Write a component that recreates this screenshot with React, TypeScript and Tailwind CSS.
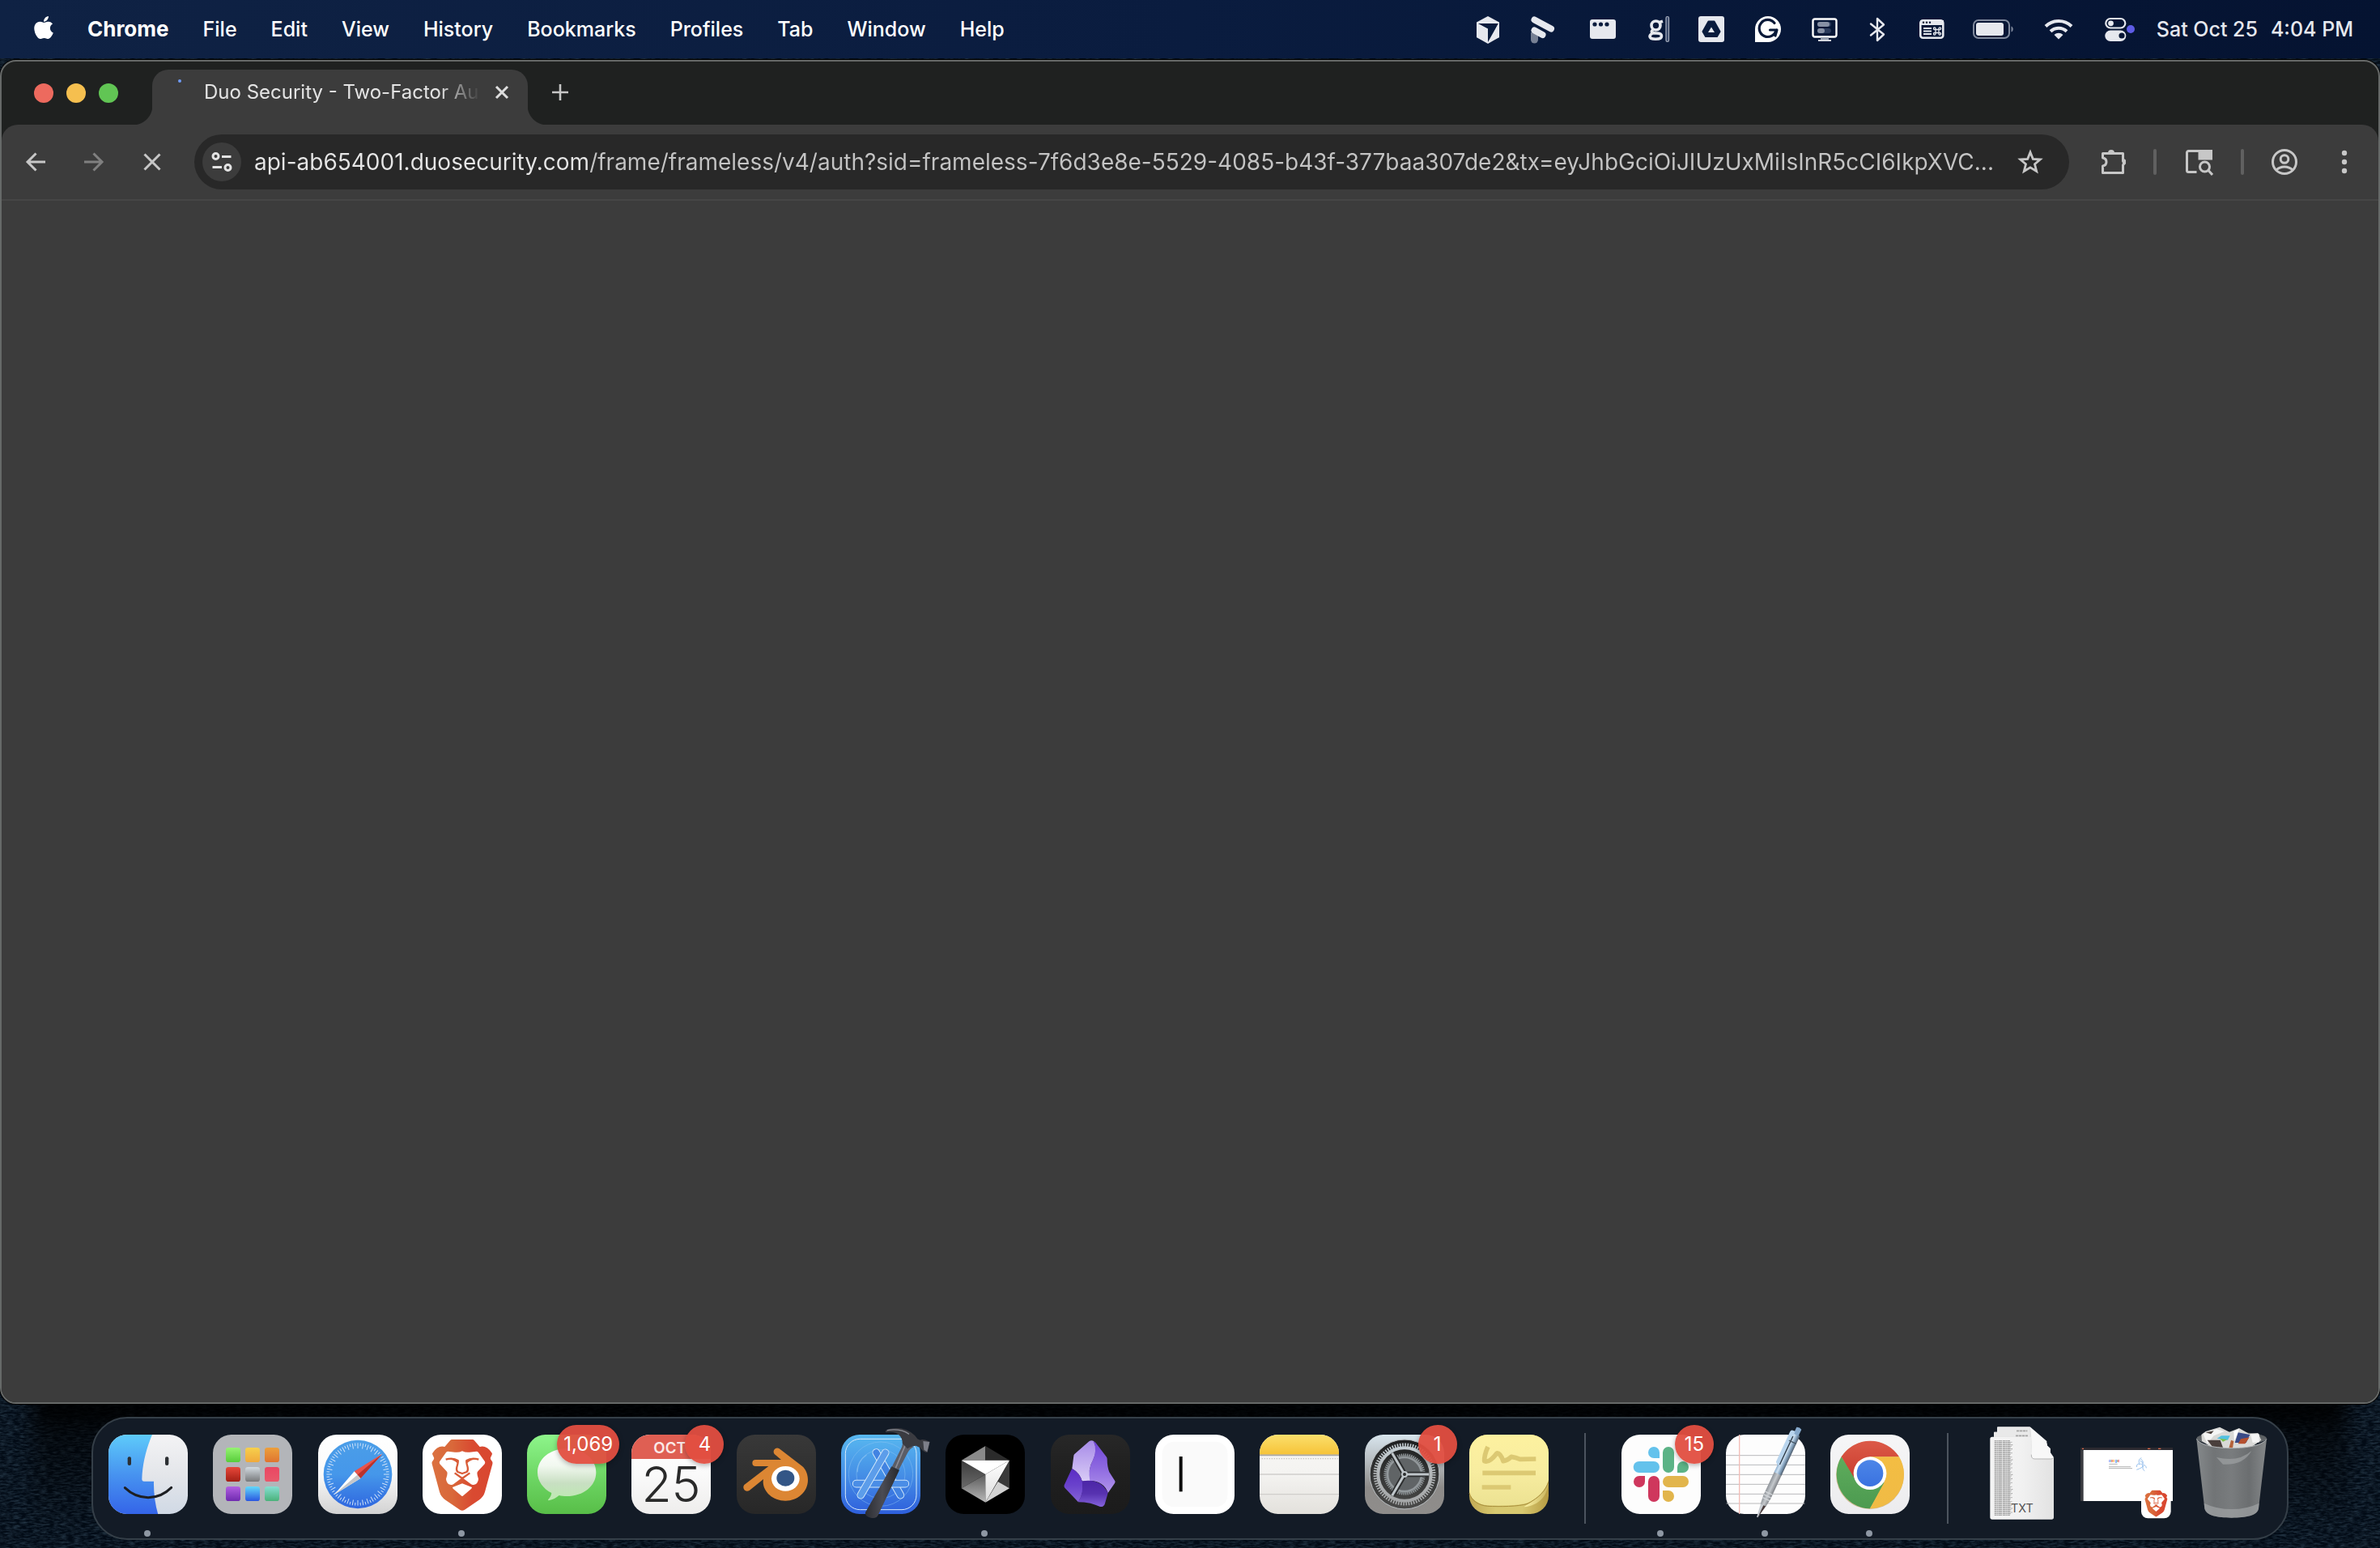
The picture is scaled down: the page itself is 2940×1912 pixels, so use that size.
import React, { type ReactNode } from "react";
import { FaApple } from "react-icons/fa";

/* ---------- Menu bar ---------- */

const MENUS = ["File", "Edit", "View", "History", "Bookmarks", "Profiles", "Tab", "Window", "Help"];

function Glyph({ w, children }: { w: number; children: ReactNode }) {
  return (
    <svg width={w} height="36" viewBox={`0 0 ${w} 36`} fill="#e6e8ee" className="shrink-0" aria-hidden="true">
      {children}
    </svg>
  );
}

const STATUS: { label: string; icon: ReactNode }[] = [
  {
    label: "Cursor",
    icon: (
      <Glyph w={30}>
        <path d="M15 2 29 9.500V28L15 36 1 28V9.500Z" />
        <path d="M2.500 11H28L15 34V18Z" fill="#091b3d" />
        <path d="M2.500 11 15 17.500V35L1 28V11Z" />
        <path d="M28 11 16 34 29 28V11Z" />
      </Glyph>
    ),
  },
  {
    label: "Shortcuts",
    icon: (
      <Glyph w={41}>
        <path d="M6 22h9v9a4.500 4.500 0 0 1-9 0Z" opacity=".5" />
        <path d="M10.500 6.500 31 17.500M10.500 19.500 20.500 25" stroke="#e6e8ee" strokeWidth="8" strokeLinecap="round" />
      </Glyph>
    ),
  },
  {
    label: "Window manager",
    icon: (
      <Glyph w={44}>
        <rect x="6" y="6" width="32" height="24" rx="3" />
        <g fill="#091b3d">
          <circle cx="12" cy="12" r="2.600" />
          <circle cx="19.500" cy="12" r="2.600" />
          <circle cx="27" cy="12" r="2.600" />
        </g>
      </Glyph>
    ),
  },
  {
    label: "Grammar",
    icon: (
      <Glyph w={32}>
        <g fill="none" stroke="#e6e8ee" strokeWidth="3.600">
          <circle cx="11.500" cy="13.500" r="5.500" />
          <path d="M16 9.500 20 8.200M8 18.500c-3.500 3.500-1.500 4.500 4 4.500 5 0 6.500 1 6.500 3.500 0 5-14 5-14.500.5 0-2 1.500-3 3.500-4" />
        </g>
        <rect x="24" y="2.500" width="3.500" height="31" rx="1.700" fill="#39496a" stroke="#a7aebd" strokeWidth="1.200" />
      </Glyph>
    ),
  },
  {
    label: "Drive",
    icon: (
      <Glyph w={32}>
        <rect x="0" y="2" width="32" height="32" rx="3" />
        <path
          d="M12.500 8.500h7l7 12.500-3.500 6H9l-3.500-6Z"
          fill="#091b3d"
          stroke="#091b3d"
          strokeWidth="2"
          strokeLinejoin="round"
        />
        <path d="M16 15.500 20 22h-8Z" />
      </Glyph>
    ),
  },
  {
    label: "Grammarly",
    icon: (
      <Glyph w={44}>
        <path d="M22 2a16 16 0 1 1 0 32H6V18A16 16 0 0 1 22 2Z" fill="#fff" />
        <path
          d="M30 10.500A10.500 10.500 0 1 0 32 19h-7.500M33 19l-2 7"
          fill="none"
          stroke="#081939"
          strokeWidth="3.200"
          strokeLinecap="round"
        />
      </Glyph>
    ),
  },
  {
    label: "Display",
    icon: (
      <Glyph w={32}>
        <rect x="1.500" y="5.500" width="29" height="22" rx="2.500" fill="none" stroke="#fff" strokeWidth="2.400" />
        <rect x="7" y="9" width="17" height="6" rx="3" fill="#2c3b5c" />
        <rect x="7" y="17" width="17" height="6" rx="3" fill="#2c3b5c" />
        <rect x="7" y="9" width="15" height="6" rx="3" fill="#8790a4" />
        <rect x="7" y="17" width="9" height="6" rx="3" fill="#8790a4" />
        <path d="M11 28h10v3H11Z" fill="#9aa2b2" />
        <path d="M8 31h16v2H8Z" fill="#d5d8df" />
      </Glyph>
    ),
  },
  {
    label: "Bluetooth",
    icon: (
      <Glyph w={34}>
        <path
          d="m9 11.500 16 13-8 7.500V5l8 7.500-16 13"
          fill="none"
          stroke="#e6e8ee"
          strokeWidth="2.400"
          strokeLinejoin="round"
          strokeLinecap="round"
        />
      </Glyph>
    ),
  },
  {
    label: "Keyboard shortcuts",
    icon: (
      <Glyph w={36}>
        <rect x="4.300" y="7.300" width="28" height="21.500" rx="3" fill="none" stroke="#e6e8ee" strokeWidth="2.600" />
        <path d="M4 7h29v6H4Z" />
        <g fill="#071736">
          <circle cx="8" cy="9.800" r="1.200" />
          <circle cx="12" cy="9.800" r="1.200" />
          <circle cx="16" cy="9.800" r="1.200" />
        </g>
        <path d="M8 17h10M8 20.500h10M8 24h10" stroke="#e6e8ee" strokeWidth="1.800" />
        <path
          d="M23 18.500h4v4h-4ZM23 18.500h-1.300a1.300 1.300 0 1 1 1.300-1.300ZM27 18.500v-1.300a1.300 1.300 0 1 1 1.300 1.300ZM23 22.500v1.300a1.300 1.300 0 1 1-1.300-1.300ZM27 22.500h1.300a1.300 1.300 0 1 1-1.300 1.300Z"
          fill="none"
          stroke="#e6e8ee"
          strokeWidth="1.300"
        />
      </Glyph>
    ),
  },
  {
    label: "Battery",
    icon: (
      <Glyph w={52}>
        <rect x="2" y="7" width="44" height="22" rx="6" fill="none" stroke="#7f889c" strokeWidth="2" />
        <rect x="5" y="10" width="34" height="16" rx="3" />
        <path d="M48.500 14.500c3 1 3 6 0 7Z" fill="#7f889c" />
      </Glyph>
    ),
  },
  {
    label: "Wi-Fi",
    icon: (
      <Glyph w={46}>
        <g fill="none" stroke="#e6e8ee" strokeWidth="4">
          <path d="M7 14.500a23 23 0 0 1 32 0" />
          <path d="M13 20.800a14.500 14.500 0 0 1 20 0" />
        </g>
        <path d="M23 30.500 17.500 25a8 8 0 0 1 11 0Z" />
      </Glyph>
    ),
  },
  {
    label: "Control Center",
    icon: (
      <Glyph w={42}>
        <rect x="3.300" y="5" width="24" height="11.500" rx="5.700" fill="none" stroke="#e6e8ee" strokeWidth="2.200" />
        <circle cx="9.500" cy="10.800" r="3.400" />
        <rect x="2.300" y="19.500" width="26" height="13.500" rx="6.700" />
        <circle cx="23" cy="26" r="3.600" fill="#061534" />
        <circle cx="34" cy="18" r="5" fill="#5e5ce6" />
      </Glyph>
    ),
  },
];

function MenuBar() {
  return (
    <header className="flex h-[72px] shrink-0 items-center justify-between bg-linear-to-r from-[#0f2244] via-[#0a1c3f] to-[#051331] pr-[33px] pl-[38px] text-[25px] leading-8 text-white">
      <nav aria-label="Menu bar" className="flex items-center gap-[42px]">
        <button aria-label="Apple menu" className="-mt-1 -mr-1">
          <FaApple className="size-8" />
        </button>
        <button className="text-[26px] font-bold">Chrome</button>
        {MENUS.map((m) => (
          <button key={m} className="font-medium">
            {m}
          </button>
        ))}
      </nav>
      <div className="flex items-center gap-8">
        {STATUS.map((s) => (
          <button key={s.label} aria-label={s.label}>
            {s.icon}
          </button>
        ))}
        <button className="-ml-2 flex gap-4 font-medium text-[#e6e8ee]">
          <span>Sat Oct 25</span>
          <span>4:04 PM</span>
        </button>
      </div>
    </header>
  );
}

/* ---------- Browser window ---------- */

function TabStrip() {
  return (
    <div className="flex h-[78px] items-end">
      <div className="flex items-center gap-4 self-center pl-10">
        <button aria-label="Close window" className="size-6 rounded-full bg-[#ed6a5e]" />
        <button aria-label="Minimize window" className="size-6 rounded-full bg-[#f5bf4f]" />
        <button aria-label="Zoom window" className="size-6 rounded-full bg-[#61c554]" />
      </div>
      <div
        role="tab"
        aria-selected="true"
        className="relative ml-[42px] flex h-[68px] w-[464px] items-start rounded-t-[20px] bg-[#3c3c3c] pt-3 pr-[22px] pl-8 before:absolute before:bottom-0 before:-left-6 before:size-6 before:bg-[radial-gradient(circle_at_0_0,transparent_24px,#3c3c3c_25px)] after:absolute after:-right-6 after:bottom-0 after:size-6 after:bg-[radial-gradient(circle_at_100%_0,transparent_24px,#3c3c3c_25px)]"
      >
        <span className="size-1 rounded-full bg-[#6f9bf5]" />
        <span className="ml-7 flex-1 text-[24px] leading-8 whitespace-nowrap text-[#e3e3e3] [mask-image:linear-gradient(90deg,#000_290px,transparent_342px)]">
          Duo Security - Two-Factor Au
        </span>
        <button aria-label="Close tab" className="ml-2 flex h-8 items-center">
          <svg width="20" height="20" viewBox="0 0 20 20" stroke="#dedede" strokeWidth="3">
            <path d="m3 3 14 14M17 3 3 17" />
          </svg>
        </button>
      </div>
      <button aria-label="New tab" className="mb-[29px] ml-[29px]">
        <svg width="22" height="22" viewBox="0 0 22 22" stroke="#c7c7c7" strokeWidth="2.600">
          <path d="M11 1v20M1 11h20" />
        </svg>
      </button>
    </div>
  );
}

function ToolButton({ label, children, w = 32 }: { label: string; children: ReactNode; w?: number }) {
  return (
    <button aria-label={label} className="shrink-0">
      <svg width={w} height="36" viewBox={`0 0 ${w} 36`} fill="none" stroke="#c7c7c7" strokeWidth="3">
        {children}
      </svg>
    </button>
  );
}

function Toolbar() {
  return (
    <div className="flex h-[94px] items-center rounded-t-[20px] border-b-2 border-[#464646] bg-[#3c3c3c] px-[26px]">
      <div className="flex items-center gap-10">
        <ToolButton label="Back">
          <path d="M28 18H6M16.500 7.500 6 18l10.500 10.500" />
        </ToolButton>
        <ToolButton label="Forward">
          <path d="M4 18h22M15.500 7.500 26 18 15.500 28.500" stroke="#808080" />
        </ToolButton>
        <ToolButton label="Stop loading">
          <path d="m6.500 8.500 19 19M25.500 8.500l-19 19" />
        </ToolButton>
      </div>
      <div className="ml-9 flex h-[68px] min-w-0 flex-1 items-center rounded-full bg-[#282828] pr-8 pl-2.5">
        <button
          aria-label="View site information"
          className="flex size-12 shrink-0 items-center justify-center rounded-full bg-[#3c3c3c]"
        >
          <svg width="26" height="26" viewBox="0 0 26 26" fill="none" stroke="#e3e3e3" strokeWidth="3">
            <circle cx="5.500" cy="6" r="3.500" />
            <path d="M13 6.500h11.500M1.500 19.500H13" />
            <circle cx="20.500" cy="20" r="3.500" />
          </svg>
        </button>
        <input
          aria-label="Address and search bar"
          readOnly
          value="api-ab654001.duosecurity.com/frame/frameless/v4/auth?sid=frameless-7f6d3e8e-5529-4085-b43f-377baa307de2&tx=eyJhbGciOiJIUzUxMiIsInR5cCI6IkpXVC..."
          className="ml-4 min-w-0 flex-1 bg-[linear-gradient(90deg,#e6e6e6_415px,#c4c4c4_415px)] bg-clip-text text-[28px] leading-10 text-transparent outline-none"
        />
        <button aria-label="Bookmark this tab" className="shrink-0">
          <svg width="32" height="32" viewBox="0 0 32 32" fill="none" stroke="#c7c7c7" strokeWidth="2.800">
            <path d="m16 4 3.300 8.300 9 .7-6.800 5.800 2.200 8.700L16 22.800l-7.700 4.700 2.200-8.700L3.700 13l9-.7Z" />
          </svg>
        </button>
      </div>
      <div className="ml-[38px] flex items-center gap-[34px]">
        <ToolButton label="Extensions">
          <path d="M3.500 7.500h25v9.500a4 4 0 0 1 0 5v9.500h-25v-8.500c6-1 6-9 0-10Z" strokeLinejoin="round" />
          <path d="M10 7a4 4 0 0 1 8 0ZM28.500 14a4 4 0 0 1 0 8Z" fill="#c7c7c7" stroke="none" />
        </ToolButton>
        <span className="h-8 w-1 rounded-full bg-[#606060]" />
        <ToolButton label="Search tabs" w={36}>
          <path d="M15.500 30.500H5.500a2 2 0 0 1-2-2v-22a2 2 0 0 1 2-2h26a2 2 0 0 1 2 2V14" />
          <path d="M19 4.500h14.500V14H19Z" fill="#c7c7c7" />
          <circle cx="25.500" cy="24" r="6" />
          <path d="m30 28.500 5 5.500" />
        </ToolButton>
        <span className="h-8 w-1 rounded-full bg-[#606060]" />
        <ToolButton label="Profile">
          <circle cx="16" cy="18" r="14.500" />
          <circle cx="16" cy="14.500" r="4.800" />
          <path d="M6 28c5-5.500 15-5.500 20 0" />
        </ToolButton>
        <div className="ml-2 flex">
          <ToolButton label="Chrome menu">
            <g fill="#c7c7c7" stroke="none">
              <circle cx="16" cy="7" r="3.200" />
              <circle cx="16" cy="18" r="3.200" />
              <circle cx="16" cy="29" r="3.200" />
            </g>
          </ToolButton>
        </div>
      </div>
    </div>
  );
}

function BrowserWindow() {
  return (
    <section
      aria-label="Duo Security - Two-Factor Authentication"
      className="mt-0.5 flex flex-1 flex-col overflow-hidden rounded-[20px] border-2 border-[#666968] bg-[#1f2120] shadow-[0_0_0_1px_#000]"
    >
      <TabStrip />
      <Toolbar />
      <main className="flex-1 bg-[#3c3c3c]" />
    </section>
  );
}

/* ---------- Dock artwork ---------- */

/* Each drawing is laid out on a 294-unit square with its own origin. */
function Art({ x, tile, children }: { x: number; tile?: string; children?: ReactNode }) {
  return (
    <svg width="98" height="98" viewBox={`${x} 216 294 294`} className="overflow-visible" aria-hidden="true">
      {tile && <rect x={x} y="216" width="294" height="294" rx="68" fill={tile} />}
      {children}
    </svg>
  );
}

function Grad({ id, stops, across = false }: { id: string; stops: string[]; across?: boolean }) {
  return (
    <linearGradient id={id} x1="0" y1="0" x2={across ? 1 : 0} y2={across ? 0 : 1}>
      {stops.map((c, i) => (
        <stop key={i} offset={i / (stops.length - 1)} stopColor={c} />
      ))}
    </linearGradient>
  );
}

function Finder() {
  return (
    <Art x={402}>
      <Grad id="fi1" stops={["#5ecbfa", "#4793f0", "#3464e8"]} />
      <Grad id="fi2" stops={["#f3f3f5", "#e4e6ea", "#d0d9e5"]} />
      <clipPath id="fic">
        <rect x="402" y="216" width="294" height="294" rx="68" />
      </clipPath>
      <g clipPath="url(#fic)">
        <path d="M402 216h294v294H402Z" fill="url(#fi2)" />
        <path d="M402 216H564C541 270 528 325 526 380Q526 389 534 389H570C569 430 575 475 586 512H402Z" fill="url(#fi1)" />
      </g>
      <rect x="473" y="298" width="13" height="32" rx="6" fill="#2c2f33" />
      <rect x="612" y="298" width="13" height="32" rx="6" fill="#2c2f33" />
      <path d="M463 413Q500 449 549 449T635 412" fill="none" stroke="#1d1f22" strokeWidth="9" strokeLinecap="round" />
    </Art>
  );
}

const PADS: [string, string][] = [
  ["#96f374", "#57cd3a"],
  ["#f6d04d", "#f0a93c"],
  ["#eca03c", "#df7430"],
  ["#e8483a", "#a31f15"],
  ["#d3dbe1", "#77797b"],
  ["#ea4763", "#e9586a"],
  ["#b15fe0", "#6f2bb0"],
  ["#62d9fb", "#2a56e0"],
  ["#86dfd2", "#4ab27a"],
];

function Launchpad() {
  return (
    <Art x={786} tile="#b3b5b9">
      {PADS.map((p, i) => (
        <g key={i}>
          <Grad id={`lp${i}`} stops={p} />
          <rect x={834 + (i % 3) * 72} y={264 + Math.floor(i / 3) * 72} width="54" height="54" rx="10" fill={`url(#lp${i})`} />
        </g>
      ))}
    </Art>
  );
}

function Safari() {
  return (
    <Art x={1176} tile="url(#sf1)">
      <Grad id="sf1" stops={["#ffffff", "#fafafa", "#d2d2d2"]} />
      <Grad id="sf2" stops={["#4b9ee8", "#4597ea", "#2f66df"]} />
      <circle cx="1323" cy="363" r="127" fill="url(#sf2)" />
      {Array.from({ length: 72 }, (_, i) => (
        <path
          key={i}
          d={i % 2 ? "M1323 247v11" : "M1323 247v20"}
          stroke="#cfe2f8"
          strokeWidth="3"
          transform={`rotate(${i * 5} 1323 363)`}
        />
      ))}
      <path d="M1414 287 1310 352 1333 378Z" fill="#e9534a" />
      <path d="M1414 287 1321 365 1333 378Z" fill="#b9332c" />
      <path d="M1236 438 1310 352 1333 378Z" fill="#fff" />
      <path d="M1236 438 1321 365 1333 378Z" fill="#c4c7cb" />
    </Art>
  );
}

function Lion() {
  return (
    <>
      <Grad id="lion" stops={["#db7140", "#d9683a", "#d94a31", "#d94730"]} across />
      <path
        d="M176 234H252Q256 234 259 238L279 261Q304 254 324 284 326 287 324 290L319 301Q318 304 319 307L326 317Q327 321 326 325L298 428Q293 446 276 458L222 495Q214 500 206 495L152 458Q135 446 130 428L102 325Q101 321 102 317L109 307Q110 304 109 301L104 290Q102 287 104 284 124 254 149 261L169 238Q172 234 176 234Z"
        fill="url(#lion)"
      />
      <path
        d="M161 278 187 281Q201 283 214 277 227 283 241 281L267 278Q271 278 274 282L298 316Q300 321 297 325L272 352Q266 358 270 366L274 380Q273 398 256 402 251 403 247 400L219 379Q214 376 209 379L181 400Q177 403 172 402 155 398 154 380L158 366Q162 358 156 352L131 325Q128 321 130 316L154 282Q157 278 161 278Z"
        fill="#fff"
      />
      <path d="M214 397 250 411Q250 414 247 417L218 442Q214 446 210 442L181 417Q178 414 178 411Z" fill="#fff" />
      <g fill="none" stroke="#d95c38" strokeWidth="7" strokeLinejoin="round">
        <path d="M153 308Q180 300 198 312 200 316 194 336 191 348 197 354L214 360 231 354Q237 348 234 336 228 316 230 312 248 300 275 308" />
        <path d="M186 358 214 378 242 358" />
      </g>
      <path d="M153 307Q180 299 200 312L196 322Q178 305 153 307ZM275 307Q248 299 228 312L232 322Q250 305 275 307Z" fill="#d95c38" />
    </>
  );
}

function Brave() {
  return (
    <Art x={67} tile="#fff">
      <Lion />
    </Art>
  );
}

function Messages() {
  return (
    <Art x={456} tile="url(#ms1)">
      <Grad id="ms1" stops={["#8ef58b", "#6fd866", "#58be48"]} />
      <Grad id="ms2" stops={["#ffffff", "#f1f8ef", "#c8dfc2", "#bdeab0"]} />
      <path d="M603 268c62 0 109 38 109 88s-47 88-109 88c-10 0-20-1-28-3-10 9-24 16-38 19-5 0-3-3 0-6 6-7 9-14 10-22-31-16-52-44-52-76 0-50 46-88 108-88Z" fill="url(#ms2)" />
    </Art>
  );
}

function Calendar() {
  return (
    <Art x={840} tile="url(#ca1)">
      <Grad id="ca1" stops={["#ffffff", "#fafafa", "#eeedec"]} />
      <path d="M840 306V284A68 68 0 0 1 908 216H1066A68 68 0 0 1 1134 284V306Z" fill="#df5f53" />
      <text x="922" y="286" fontSize="56" fontWeight="600" fill="#fbe9e7">
        OCT
      </text>
      <text x="987" y="466" fontSize="182" fontWeight="300" fill="#2a2a2a" textAnchor="middle">
        25
      </text>
    </Art>
  );
}

function Blender() {
  return (
    <Art x={1230} tile="url(#bl1)">
      <Grad id="bl1" stops={["#383838", "#303030", "#272727"]} />
      <path
        d="M1388 268 1472 332C1487 344 1494 364 1494 384 1494 428 1456 461 1411 461 1364 461 1328 428 1328 390L1329 381 1277 423C1262 432 1249 414 1258 402L1348 333H1300A11.500 11.500 0 0 1 1300 309H1395L1370 288C1361 276 1374 260 1388 268Z"
        fill="#dc8633"
      />
      <ellipse cx="1411" cy="379" rx="52" ry="46" fill="#fff" />
      <ellipse cx="1411" cy="377" rx="33" ry="30" fill="#335686" />
    </Art>
  );
}

function Xcode() {
  return (
    <Art x={120} tile="url(#xc1)">
      <Grad id="xc1" stops={["#58b8f0", "#458fe6", "#2e5fdc"]} />
      <Grad id="xc2" stops={["#2b2c31", "#4b4c54", "#26272b"]} across />
      <rect x="136" y="232" width="263" height="262" rx="54" fill="none" stroke="#d9ecfb" strokeWidth="3" />
      <g fill="none" stroke="#8ec4f2" strokeWidth="2" opacity=".7">
        <circle cx="267" cy="362" r="119" />
        <circle cx="267" cy="362" r="90" />
        <path d="M180 355q0-40 34-64" strokeWidth="4" />
      </g>
      <g fill="none" strokeLinecap="round">
        <path d="M250 282 340 440" stroke="#cfe6fa" strokeWidth="29" />
        <path d="M250 282 340 440" stroke="#4283e2" strokeWidth="23" />
        <path d="M176 398H358" stroke="#cfe6fa" strokeWidth="29" />
        <path d="M176 398H358" stroke="#4a8de6" strokeWidth="23" />
        <path d="M284 283 193 440" stroke="#cfe6fa" strokeWidth="29" />
        <path d="M284 283 193 440" stroke="#5c9dea" strokeWidth="23" />
      </g>
      <path d="M350 240 388 262Q375 268 366 284L334 346 308 336 345 262Z" fill="#5b5d66" />
      <path d="M360 250 322 340" stroke="#8a8c96" strokeWidth="5" />
      <path d="M307 334 336 347 258 512Q252 528 230 524 206 518 210 504Z" fill="url(#xc2)" />
      <path
        d="M284 202Q304 188 342 193 384 202 403 232L413 236Q424 230 449 242L440 282Q426 282 412 264L397 257Q377 259 366 268L347 248Q348 222 324 210 304 204 286 208Z"
        fill="#3a3b41"
      />
      <path d="M290 200Q340 192 372 214" fill="none" stroke="#8c8e97" strokeWidth="4" />
      <path d="M424 240 448 243 439 280 427 272Z" fill="#7d7f89" />
    </Art>
  );
}

function Cursor() {
  return (
    <Art x={503} tile="#000">
      <Grad id="cu1" stops={["#3c3c3c", "#6a6a6a"]} />
      <Grad id="cu2" stops={["#ffffff", "#dcdcdc"]} />
      <Grad id="cu3" stops={["#5a5a5a", "#b9b9b9"]} />
      <path d="M562 311 651 258V311Z" fill="#8a8a8a" />
      <path d="M651 258 740 311H651Z" fill="#2b2b2b" />
      <path d="M562 311 651 363 562 415Z" fill="url(#cu1)" />
      <path d="M562 415 651 363V467Z" fill="url(#cu3)" />
      <path d="M740 311V415L697 390Z" fill="#3a3a3a" />
      <path d="M697 390 740 415 651 467Z" fill="#d2d2d2" />
      <path d="M740 311 651 467V363Z" fill="url(#cu2)" />
      <path d="M562 311H740L651 363Z" fill="#fff" />
    </Art>
  );
}

function Obsidian() {
  return (
    <Art x={893} tile="url(#ob0)">
      <Grad id="ob0" stops={["#272727", "#1f1f1f", "#1b1b1b"]} />
      <Grad id="ob1" stops={["#a78be8", "#d9ccf6"]} />
      <Grad id="ob2" stops={["#6f45d6", "#8d68e0", "#b195ec"]} />
      <Grad id="ob3" stops={["#5a2cc4", "#6a42cc", "#8463d6"]} />
      <Grad id="ob4" stops={["#4b25a6", "#5732b0", "#8563dc"]} />
      <path d="M1035 241 981 288Q978 291 978 295L972 342Q1000 357 1010 390L1042 387Q1028 345 1050 310 1068 275 1052 240 1044 235 1035 241Z" fill="url(#ob1)" />
      <path d="M1052 240Q1057 242 1060 247L1100 299Q1102 303 1102 307 1102 335 1110 355L1131 388Q1133 392 1130 396L1105 432Q1090 388 1038 387 1030 345 1048 312 1066 275 1052 240Z" fill="url(#ob2)" />
      <path d="M972 342Q970 344 968 349L943 403Q941 408 945 413L995 466Q1018 430 1010 390 1000 357 972 342Z" fill="url(#ob3)" />
      <path d="M995 466Q1016 430 1009 388 1078 376 1105 432L1093 474Q1088 485 1076 483 1060 476 1040 470 1015 466 995 466Z" fill="url(#ob4)" />
    </Art>
  );
}

function Ia() {
  return (
    <Art x={1284} tile="#fff">
      <rect x="1310" y="242" width="242" height="242" rx="44" fill="#fafafa" />
      <rect x="1373" y="297" width="12" height="130" fill="#0a0a0a" />
    </Art>
  );
}

function Notes() {
  return (
    <Art x={174} tile="url(#no1)">
      <Grad id="no1" stops={["#f8f7f5", "#f4f3f1", "#e3e1dc"]} />
      <Grad id="no2" stops={["#fbdf6c", "#f6c338"]} />
      <path d="M174 290V284A68 68 0 0 1 242 216H400A68 68 0 0 1 468 284V290Z" fill="url(#no2)" />
      <path d="M174 292H468" stroke="#a8a6a2" strokeWidth="5" />
      <path d="M182 305H464" stroke="#c6c4c0" strokeWidth="4" strokeDasharray="4 5" />
      <path d="M174 363H468M174 437H468" stroke="#d0cecb" strokeWidth="4" />
    </Art>
  );
}

function Settings() {
  return (
    <Art x={558} tile="url(#se1)">
      <Grad id="se1" stops={["#d8e5ed", "#b6bcc0", "#8d8b89", "#8f8d8b"]} />
      <Grad id="se2" stops={["#1d1f20", "#4a4a49"]} />
      <Grad id="se3" stops={["#c3cdd2", "#b3b7b9", "#a5a7a8"]} />
      <circle cx="705" cy="363" r="128" fill="url(#se2)" />
      <circle cx="705" cy="363" r="129" fill="none" stroke="#b4b9bc" strokeWidth="3" />
      <g fill="none" stroke="url(#se3)">
        <circle cx="705" cy="363" r="109" strokeWidth="13" strokeDasharray="5 4.510" />
        <circle cx="705" cy="363" r="98" strokeWidth="12" />
      </g>
      <circle cx="705" cy="363" r="72" fill="#606466" />
      <g fill="none" stroke="#92989b">
        <circle cx="705" cy="363" r="72" strokeWidth="10" strokeDasharray="4 3.540" />
        <circle cx="705" cy="363" r="63" strokeWidth="8" />
      </g>
      <g stroke="#2b2d2e" strokeWidth="20">
        <path d="M705 363H792M705 363 662 288M705 363 662 438" />
      </g>
      <g stroke="#bfc6ca" strokeWidth="9">
        <path d="M705 363H796M705 363 659 284M705 363 659 442" />
      </g>
      <circle cx="705" cy="363" r="12" fill="#bfc6ca" />
      <circle cx="705" cy="363" r="6" fill="#2b2d2e" />
    </Art>
  );
}

function Stickies() {
  return (
    <Art x={948} tile="url(#st1)">
      <Grad id="st1" stops={["#c3ab55", "#d8c970", "#d8c970", "#b79c43"]} across />
      <Grad id="st2" stops={["#fdf19f", "#f8eda0", "#ece292"]} />
      <Grad id="st3" stops={["#fbf2a4", "#c9b45c"]} across />
      <path d="M1242 392C1238 440 1210 478 1150 484L1170 470C1210 445 1230 420 1242 392Z" fill="url(#st3)" />
      <path
        d="M948 284A68 68 0 0 1 1016 216H1174A68 68 0 0 1 1242 284V384C1234 420 1200 455 1164 469 1130 480 1050 480 1016 478 976 475 950 450 948 425Z"
        fill="url(#st2)"
      />
      <path d="M948 432C956 462 985 478 1016 481 1060 483 1130 483 1164 472 1205 450 1230 425 1241 392" fill="none" stroke="#a98f3c" strokeWidth="3" />
      <g fill="none" stroke="#dcc973" strokeWidth="17">
        <path d="M1017 261Q1003 292 1004 314 1022 322 1050 285 1062 282 1074 314 1090 312 1104 298 1120 300 1136 307L1195 306" strokeLinejoin="round" />
        <path d="M997 358H1194M995 411H1102" />
      </g>
    </Art>
  );
}

function Slack() {
  return (
    <Art x={192} tile="#fdfdfd">
      <g fill="#64c2ec">
        <rect x="236" y="315" width="97" height="42" rx="21" />
        <path d="M333 303H312A21 21 0 1 1 333 282Z" />
      </g>
      <g fill="#5cb386">
        <rect x="345" y="261" width="42" height="96" rx="21" />
        <path d="M399 357V336A21 21 0 1 1 420 357Z" />
      </g>
      <g fill="#cf375d">
        <rect x="291" y="369" width="42" height="96" rx="21" />
        <path d="M279 369V390A21 21 0 1 1 258 369Z" />
      </g>
      <g fill="#e2b54c">
        <rect x="345" y="369" width="96" height="42" rx="21" />
        <path d="M345 423H366A21 21 0 1 1 345 444Z" />
      </g>
    </Art>
  );
}

function TextEdit() {
  return (
    <Art x={582} tile="#fdfdfd">
      <path d="M582 293H876M582 328H876M582 364H876M582 400H876M582 436H876M584 471H874" stroke="#b9babc" strokeWidth="3" />
      <path d="M632 216V510" stroke="#f3bdb7" strokeWidth="4" />
      <Grad id="te1" stops={["#8fb0cf", "#cfe2f3", "#86a4c0", "#4d5b6b"]} across />
      <Grad id="te2" stops={["#8e9399", "#c5c9cd", "#7d8085"]} across />
      <g transform="rotate(25 705 510)">
        <path d="M694 470H716L706 524H702Z" fill="#c7ccd2" />
        <path d="M706 470H716L706 524Z" fill="#4a3c3c" />
        <path d="M690 340H720V440L716 474H694L690 440Z" fill="url(#te2)" />
        <path d="M690 425H720M690 437H720M691 449H719" stroke="#d3d6da" strokeWidth="4" />
        <path d="M690 184H720V346H690Z" fill="url(#te1)" />
        <path d="M695 160Q705 154 715 160V186H695Z" fill="#86a9cc" />
        <path d="M680 184Q682 176 690 176H697V312L688 316 680 308Z" fill="#b9d5ee" />
        <path d="M697 196V312" stroke="#2d3843" strokeWidth="4" />
        <path d="M690 216H720" stroke="#4b5a68" strokeWidth="4" />
      </g>
    </Art>
  );
}

function Chrome() {
  return (
    <Art x={966} tile="url(#ch0)">
      <Grad id="ch0" stops={["#f6f6f7", "#ececee"]} />
      <Grad id="ch1" stops={["#dc5a48", "#c83a2c"]} />
      <Grad id="ch2" stops={["#5eac5c", "#4c9a50"]} />
      <Grad id="ch3" stops={["#f3bd43", "#f0bb45"]} />
      <Grad id="ch4" stops={["#4c86e8", "#3a72e0"]} />
      <circle cx="1113" cy="366" r="126" fill="#b98c3a" opacity=".5" />
      <path d="M1007 298A127 127 0 0 1 1221 298H1113L1055 385Z" fill="url(#ch1)" />
      <path d="M1007 298A127 127 0 0 0 1113 490L1168 395 1113 362 1060 385Z" fill="url(#ch2)" />
      <path d="M1221 298A127 127 0 0 1 1113 490L1166 392 1175 359 1113 298Z" fill="url(#ch3)" />
      <circle cx="1113" cy="359" r="61" fill="#fff" />
      <circle cx="1113" cy="359" r="49" fill="url(#ch4)" />
    </Art>
  );
}

function TextFiles() {
  return (
    <Art x={90}>
      <Grad id="tf1" stops={["#f4f4f4", "#f1f1f1", "#e2e2e2"]} across />
      <path d="M144 188H266L330 250V500H144Z" fill="#d6d6d6" />
      <path d="M132 206H268L342 268V510H132Z" fill="#dedede" />
      <path d="M126 224H270V300H354V522Q354 530 346 530H126Q118 530 118 522V232Q118 224 126 224Z" fill="url(#tf1)" />
      <path d="M144 190Q144 187 148 187H266V224H132V208Q132 206 136 206H144Z" fill="#e9e9e9" />
      <path d="M216 202H256M213 220H258" stroke="#a5a5a5" strokeWidth="5" strokeDasharray="10 2" />
      <path d="M266 187 328 240V254L340 266V280L354 300Q352 306 344 306H284Q270 306 271 290 274 230 266 187Z" fill="#f8f8f8" />
      <path d="M354 300Q352 306 344 306H284Q270 306 271 290" fill="none" stroke="#b5b5b5" strokeWidth="3" />
      {Array.from({ length: 56 }, (_, i) => (
        <path
          key={i}
          d={`M134 ${239 + i * 5}h${58 + ((i * 7) % 11)}`}
          stroke="#999"
          strokeWidth="3"
          strokeDasharray="9 1 5 1 13 2"
        />
      ))}
      <text x="195" y="505" fontSize="43" fill="#555">
        TXT
      </text>
    </Art>
  );
}

function MinimizedWindow() {
  return (
    <Art x={480}>
      <path d="M456 264H798V462H456Z" fill="#fff" />
      <path d="M456 264H467V462H456Z" fill="#3a3b40" />
      <path d="M456 264H798V273H456Z" fill="#2c2a30" />
      <path d="M462 268H468M705 268H715M744 268H754" stroke="#d9694a" strokeWidth="4" />
      <text x="560" y="317" fontSize="12" fontWeight="600">
        <tspan fill="#4285f4">G</tspan>
        <tspan fill="#ea4335">o</tspan>
        <tspan fill="#fbbc05">o</tspan>
        <tspan fill="#4285f4">g</tspan>
        <tspan fill="#34a853">l</tspan>
        <tspan fill="#ea4335">e</tspan>
      </text>
      <path d="M562 325H593M561 335H642M561 341H648" stroke="#b5b5b5" strokeWidth="3" />
      <path
        d="M682 302q-14 6-8 20-12 4-10 14M680 306q12 8 6 20 14 4 14 14M672 326q16-6 14 10-14 8-22 10M690 330q-8 14 4 20M676 312l14 10"
        fill="none"
        stroke="#9cc3ee"
        strokeWidth="3"
      />
      <rect x="681" y="417" width="110" height="109" rx="25" fill="#fff" />
      <g transform="translate(657 336) scale(.37)">
        <Lion />
      </g>
    </Art>
  );
}

function Trash() {
  return (
    <Art x={867}>
      <Grad id="tr1" stops={["#85898b", "#717476", "#797c7e", "#6b6e70", "#85888a"]} across />
      <Grad id="tr2" stops={["#505457", "#707477"]} />
      <ellipse cx="1016" cy="230" rx="130" ry="24" fill="url(#tr2)" />
      <path d="M904 216 920 204 972 188 1008 206 1044 192 1080 212 1114 210 1126 236 1090 262 1014 268 940 262 906 240Z" fill="#d9d9d7" />
      <path d="M910 212 960 196 990 204 950 220 926 250ZM1086 214 1118 214 1118 244 1094 246Z" fill="#f5f5f5" />
      <path d="M926 236 974 236 984 264 946 262ZM920 208l30-6-10 12Z" fill="#4a3f3c" />
      <path d="M978 220H1010L1002 236 962 230Z" fill="#52c0e0" />
      <path d="M972 230 1000 234 984 242Z" fill="#7bc04f" />
      <path d="M1014 236 1006 266H1020L1024 240Z" fill="#b4623a" />
      <path d="M1040 208 1084 216 1070 246 1028 246Z" fill="#3a4a86" />
      <path d="M1050 232 1082 226 1066 250 1040 250Z" fill="#b5502f" />
      <path d="M1024 204 1044 194 1038 212 1026 240Z" fill="#fff" />
      <path d="M886 232C900 256 960 266 1016 266S1132 256 1146 232L1116 490C1112 516 1070 524 1016 524S922 516 916 490Z" fill="url(#tr1)" />
      <path d="M886 232C900 256 960 266 1016 266S1132 256 1146 232" fill="none" stroke="#b3b6b8" strokeWidth="3" />
      <path d="M960 300Q1040 320 1090 276 1060 330 984 326Z" fill="#a5a8aa" opacity=".6" />
      <path d="M914 470Q960 492 1016 492T1118 470L1116 490C1112 516 1070 524 1016 524S922 516 916 490Z" fill="#a9acae" opacity=".6" />
    </Art>
  );
}

/* ---------- Dock ---------- */

type Item = { name: string; art: ReactNode; badge?: string; running?: boolean };

const APPS: Item[] = [
  { name: "Finder", art: <Finder />, running: true },
  { name: "Launchpad", art: <Launchpad /> },
  { name: "Safari", art: <Safari /> },
  { name: "Brave Browser", art: <Brave />, running: true },
  { name: "Messages", art: <Messages />, badge: "1,069" },
  { name: "Calendar", art: <Calendar />, badge: "4" },
  { name: "Blender", art: <Blender /> },
  { name: "Xcode", art: <Xcode /> },
  { name: "Cursor", art: <Cursor />, running: true },
  { name: "Obsidian", art: <Obsidian /> },
  { name: "Writer", art: <Ia /> },
  { name: "Notes", art: <Notes /> },
  { name: "System Settings", art: <Settings />, badge: "1" },
  { name: "Stickies", art: <Stickies /> },
];

const RECENT: Item[] = [
  { name: "Slack", art: <Slack />, badge: "15", running: true },
  { name: "TextEdit", art: <TextEdit />, running: true },
  { name: "Google Chrome", art: <Chrome />, running: true },
];

const STACKS: Item[] = [
  { name: "Text documents", art: <TextFiles /> },
  { name: "Minimized Brave window", art: <MinimizedWindow /> },
  { name: "Trash", art: <Trash /> },
];

function DockItem({ item }: { item: Item }) {
  return (
    <button aria-label={item.name} className="relative size-[98px] shrink-0">
      {item.art}
      {item.badge && (
        <span className="absolute -top-3 -right-4 flex h-12 min-w-12 items-center justify-center rounded-full bg-[#e14e40]/95 px-2 text-[24px] leading-none text-white shadow-[0_2px_6px_rgba(0,0,0,0.3)]">
          {item.badge}
        </span>
      )}
      {item.running && <span className="absolute -bottom-7 left-11 size-2 rounded-full bg-[#8e97a3]" />}
    </button>
  );
}

function Dock() {
  return (
    <footer className="mx-[113px] mt-4 mb-2.5 flex h-[152px] shrink-0 items-start rounded-[44px] border-2 border-[#353f48] bg-[#131b26] pt-5 pr-5 pl-[19px]">
      <div className="flex flex-1 justify-between">
        {APPS.map((a) => (
          <DockItem key={a.name} item={a} />
        ))}
      </div>
      <span className="mx-11 -mt-0.5 h-28 w-0.5 bg-[#4c545e]" />
      <div className="flex gap-[31px]">
        {RECENT.map((a) => (
          <DockItem key={a.name} item={a} />
        ))}
      </div>
      <span className="mr-[42px] ml-[46px] -mt-0.5 h-28 w-0.5 bg-[#4c545e]" />
      <div className="flex gap-[31px]">
        {STACKS.map((a) => (
          <DockItem key={a.name} item={a} />
        ))}
      </div>
    </footer>
  );
}

/* Dark sea texture behind the windows, fading to black near the browser's lower edge. */
function Wallpaper() {
  return (
    <>
      <svg className="absolute inset-0 -z-10 size-full" aria-hidden="true">
        <filter id="sea" x="0" y="0" width="100%" height="100%">
          <feTurbulence type="fractalNoise" baseFrequency="0.12 0.45" numOctaves="3" seed="4" />
          <feColorMatrix values="0 0 0 0 0.12  0 0 0 0 0.23  0 0 0 0 0.33  1.600 0 0 0 -0.550" />
        </filter>
        <rect width="100%" height="100%" fill="#030c17" />
        <rect width="100%" height="100%" filter="url(#sea)" opacity=".4" />
      </svg>
      <div className="absolute inset-x-10 bottom-0 -z-10 h-[190px] bg-linear-to-b from-black from-10% via-black/60 via-20% to-transparent to-90% blur-md" />
    </>
  );
}

export default function App() {
  return (
    <div className="relative isolate flex h-screen flex-col overflow-hidden bg-[#030d1a] font-['Inter',sans-serif]">
      <Wallpaper />
      <MenuBar />
      <BrowserWindow />
      <Dock />
    </div>
  );
}
